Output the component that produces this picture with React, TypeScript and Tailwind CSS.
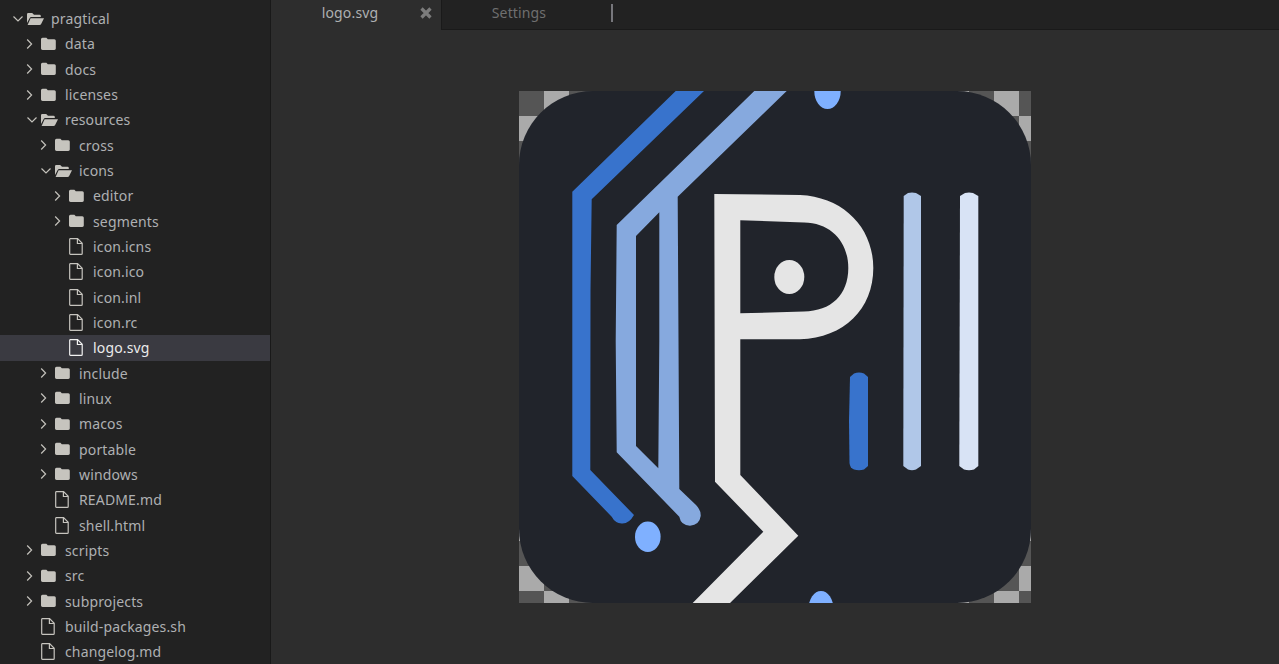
import React from "react";

type Kind = "closed" | "open" | "file";

interface Item {
  name: string;
  depth: number;
  kind: Kind;
  selected?: boolean;
}

const tree: Item[] = [
  { name: "pragtical", depth: 0, kind: "open" },
  { name: "data", depth: 1, kind: "closed" },
  { name: "docs", depth: 1, kind: "closed" },
  { name: "licenses", depth: 1, kind: "closed" },
  { name: "resources", depth: 1, kind: "open" },
  { name: "cross", depth: 2, kind: "closed" },
  { name: "icons", depth: 2, kind: "open" },
  { name: "editor", depth: 3, kind: "closed" },
  { name: "segments", depth: 3, kind: "closed" },
  { name: "icon.icns", depth: 3, kind: "file" },
  { name: "icon.ico", depth: 3, kind: "file" },
  { name: "icon.inl", depth: 3, kind: "file" },
  { name: "icon.rc", depth: 3, kind: "file" },
  { name: "logo.svg", depth: 3, kind: "file", selected: true },
  { name: "include", depth: 2, kind: "closed" },
  { name: "linux", depth: 2, kind: "closed" },
  { name: "macos", depth: 2, kind: "closed" },
  { name: "portable", depth: 2, kind: "closed" },
  { name: "windows", depth: 2, kind: "closed" },
  { name: "README.md", depth: 2, kind: "file" },
  { name: "shell.html", depth: 2, kind: "file" },
  { name: "scripts", depth: 1, kind: "closed" },
  { name: "src", depth: 1, kind: "closed" },
  { name: "subprojects", depth: 1, kind: "closed" },
  { name: "build-packages.sh", depth: 1, kind: "file" },
  { name: "changelog.md", depth: 1, kind: "file" },
];

function Chevron({ open }: { open: boolean }) {
  return (
    <svg width="12" height="12" viewBox="0 0 12 12" className="shrink-0 text-[#c4c2bc]">
      {open ? (
        <path d="M1.5 3.5 L6 8 L10.5 3.5" fill="none" stroke="currentColor" strokeWidth="1.2" />
      ) : (
        <path d="M1.2 1.5 L5.6 6 L1.2 10.5" fill="none" stroke="currentColor" strokeWidth="1.2" />
      )}
    </svg>
  );
}

function FolderIcon() {
  return (
    <svg width="17" height="14" viewBox="0 0 17 14" className="text-[#c6c4be]">
      <path
        d="M1.5 0.8 H5.4 L6.8 2.2 H13.3 Q14.8 2.2 14.8 3.7 V11.6 Q14.8 13 13.3 13 H1.5 Q0 13 0 11.6 V2.3 Q0 0.8 1.5 0.8 Z"
        fill="currentColor"
      />
    </svg>
  );
}

function FolderOpenIcon() {
  return (
    <svg width="17" height="14" viewBox="0 0 17 14" className="text-[#c6c4be]">
      <path
        d="M0 11 V2.2 Q0 1 1.2 1 H5.2 L7 2.8 H12.5 Q13.8 2.8 13.8 4 V5 H4.2 Q3.2 5 2.7 6 Z"
        fill="currentColor"
      />
      <path d="M3.6 6.2 H17 L14 12.2 Q13.6 13 12.6 13 H0.6 Z" fill="currentColor" />
    </svg>
  );
}

function FileIcon({ selected }: { selected?: boolean }) {
  return (
    <svg
      width="14"
      height="17"
      viewBox="0 0 14 17"
      className={selected ? "text-[#f2f2f2]" : "text-[#c6c4be]"}
    >
      <path
        d="M1.2 0.7 H8.6 L13.2 5.3 V15.4 Q13.2 16.3 12.3 16.3 H1.5 Q0.7 16.3 0.7 15.4 V1.5 Q0.7 0.7 1.2 0.7 Z M8.4 0.9 V5.5 H13"
        fill="none"
        stroke="currentColor"
        strokeWidth="1.2"
      />
    </svg>
  );
}

function TreeRow({ item }: { item: Item }) {
  const isFolder = item.kind !== "file";
  return (
    <div
      className={`flex h-[25.34px] items-center ${
        item.selected
          ? "mt-[0.25px] -mb-[0.25px] pb-[1px] bg-[#3a3a41] text-[#ebebeb]"
          : "text-[#aeb0b2]"
      }`}
      style={{ paddingLeft: 12 + item.depth * 14 }}
    >
      <div className="flex w-[15px] shrink-0 items-center">
        {isFolder && <Chevron open={item.kind === "open"} />}
      </div>
      <div className="mr-[7px] flex w-[17px] shrink-0 items-center">
        {item.kind === "closed" && <FolderIcon />}
        {item.kind === "open" && <FolderOpenIcon />}
        {item.kind === "file" && <FileIcon selected={item.selected} />}
      </div>
      <span className="whitespace-nowrap">{item.name}</span>
    </div>
  );
}

function Logo() {
  return (
    <svg width="512" height="512" viewBox="0 0 512 512" className="block shrink-0">
      <defs>
        <pattern id="checker" width="50" height="50" patternUnits="userSpaceOnUse">
          <rect width="50" height="50" fill="#555555" />
          <rect x="25" width="25" height="25" fill="#aaaaaa" />
          <rect y="25" width="25" height="25" fill="#aaaaaa" />
        </pattern>
        <clipPath id="plate">
          <rect width="512" height="512" rx="74" />
        </clipPath>
      </defs>
      <rect width="512" height="512" fill="url(#checker)" />
      <rect width="512" height="512" rx="74" fill="#21242b" />
      <g clipPath="url(#plate)">
        {/* outer dark trace */}
        <path
          d="M156.7 0 H185 L72.7 108.3 L71.5 200 L71.3 379 L115 424 Q110 433 102.7 432.5 Q96 432 92.7 425.7 L53.3 385 V100.7 Z"
          fill="#3873cc"
        />
        {/* light double trace */}
        <path
          fillRule="evenodd"
          d="M235.3 0 H267.7 L158.7 105.7 L159.5 250 L160.3 398 L177 414 Q182 419 181.7 425 Q180.5 434 171 434.7 Q162 434.5 160.3 425.7 L97.7 361.3 L96.7 250 L97.7 134 Z M117 145 V355 L139.3 377.3 L140.3 250 V121.3 Z"
          fill="#86a9de"
        />
        {/* P and arrow */}
        <path
          fillRule="evenodd"
          d="M195.3 103 L281 104 C325 106 354.3 137 354.3 177 C354.3 218 325 247 281 248.3 L221.3 248.3 V384 L279.3 444.7 L211 512 H173.7 L244.3 440.7 L196 390.7 Z M221.3 129.3 V222.3 L285 220.5 C312 220 329.3 204 329.3 177 C329.3 152 313 132 285 131.5 Z"
          fill="#e5e5e5"
        />
        <ellipse cx="270.3" cy="186" rx="15" ry="17" fill="#e5e5e5" />
        <ellipse cx="308.5" cy="0" rx="13.2" ry="18" fill="#7fb0ff" />
        <ellipse cx="302" cy="518" rx="12.5" ry="18" fill="#7fb0ff" />
        <ellipse cx="128.8" cy="445.7" rx="12.8" ry="15.2" fill="#7fb0ff" />
        {/* bars */}
        <path
          d="M331 286 L335 282.5 Q340 280.5 345 282.5 L349 286 V375 L345 378.5 Q340 380 335 378.5 Q331 377 330.5 372 L330 330 Z"
          fill="#3873cc"
        />
        <path
          d="M384.7 105 L389 102 Q393 100.8 397 102 L402 105 V375 L397 378.5 Q393 380 389 378.5 L384.3 375 Z"
          fill="#b0c7e8"
        />
        <path
          d="M441 105 L446 102 Q450 100.8 454 102 L459.3 105 V375 L455 378.5 Q450 380 445 378.5 L440.3 375 Z"
          fill="#d8e3f5"
        />
      </g>
    </svg>
  );
}

export default function App() {
  return (
    <div className="flex h-screen w-full overflow-hidden bg-[#2d2d2d] font-['Noto_Sans',sans-serif] text-[14px] tracking-[0.15px]">
      {/* file tree */}
      <aside className="w-[271px] shrink-0 overflow-hidden border-r border-[#191919] bg-[#222222] pt-[5.9px]">
        {tree.map((item) => (
          <TreeRow key={item.name + item.depth} item={item} />
        ))}
      </aside>

      <main className="flex min-w-0 flex-1 flex-col">
        {/* tabs */}
        <div className="flex h-[30px] shrink-0 border-b border-[#1a1a1a] bg-[#222222]">
          <div className="-mb-px flex w-[170px] items-center justify-center bg-[#2d2d2d] pb-[5px] pr-3 text-[#aeb0b2] relative">
            logo.svg
            <svg width="12" height="12" viewBox="0 0 12 12" className="absolute left-[149px] top-[7px] text-[#7c7c7c]">
              <path d="M1.5 1.5 L10.5 10.5 M10.5 1.5 L1.5 10.5" stroke="currentColor" strokeWidth="3.2" />
            </svg>
          </div>
          <div className="flex w-[170px] items-center justify-center border-l border-[#1a1a1a] pb-[5px] pr-[15px] text-[#6f6f6f]">
            Settings
          </div>
          <div className="mt-1 h-[18px] w-[2px] bg-[#77777c]" />
        </div>

        {/* image view */}
        <div className="flex min-h-0 flex-1 items-center justify-center">
          <Logo />
        </div>
      </main>
    </div>
  );
}
